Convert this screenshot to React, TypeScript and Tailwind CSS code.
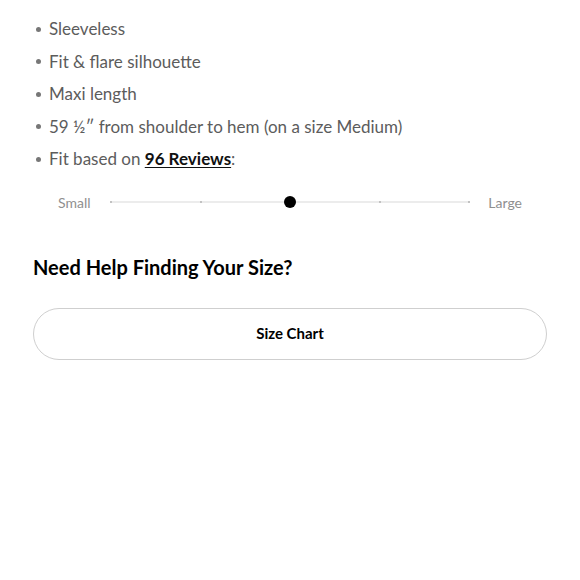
import { useState } from "react";

const details = [
  "Sleeveless",
  "Fit & flare silhouette",
  "Maxi length",
  "59 ½″ from shoulder to hem (on a size Medium)",
];

function FitSlider({ value }: { value: number }) {
  const stops = [0, 1, 2, 3, 4];

  return (
    <div className="flex items-center pl-[25px] pr-[25px]">
      <span className="w-[52px] text-[14px] text-[#8f8f8f]">Small</span>
      <div className="relative h-[12px] flex-1">
        <div className="absolute left-0 right-0 top-[5px] h-[2px] bg-[#ececec]" />
        <div className="absolute inset-0 flex items-center justify-between">
          {stops.map((stop) =>
            stop === value ? (
              <span key={stop} className="-mx-[5px] h-[12px] w-[12px] rounded-full bg-black" />
            ) : (
              <span key={stop} className="h-[2px] w-[2px] rounded-full bg-[#b5b5b5]" />
            )
          )}
        </div>
      </div>
      <span className="w-[52px] text-right text-[14px] text-[#8f8f8f]">Large</span>
    </div>
  );
}

export default function App() {
  const [fit] = useState(2);

  return (
    <div className="min-h-screen bg-white px-[33px] pt-[13px] text-[#5c5c5c] [font-family:Lato,'Open_Sans',sans-serif]">
      <ul className="text-[17px] leading-[32.5px]">
        {details.map((item) => (
          <li key={item} className="flex items-center">
            <span className="mr-[8px] ml-[3px] h-[5px] w-[5px] rounded-full bg-[#777]" />
            {item}
          </li>
        ))}
        <li className="flex items-center">
          <span className="mr-[8px] ml-[3px] h-[5px] w-[5px] rounded-full bg-[#777]" />
          Fit based on&nbsp;
          <a href="#" className="font-bold text-[#111] underline underline-offset-2">
            96 Reviews
          </a>
          :
        </li>
      </ul>

      <div className="mt-[16px]">
        <FitSlider value={fit} />
      </div>

      <h2 className="mt-[39px] text-[20px] font-bold text-black">Need Help Finding Your Size?</h2>

      <button
        type="button"
        className="mt-[26px] flex h-[52px] w-full items-center justify-center rounded-full border border-[#cfcfcf] bg-white text-[15px] font-bold text-black"
      >
        Size Chart
      </button>
    </div>
  );
}
